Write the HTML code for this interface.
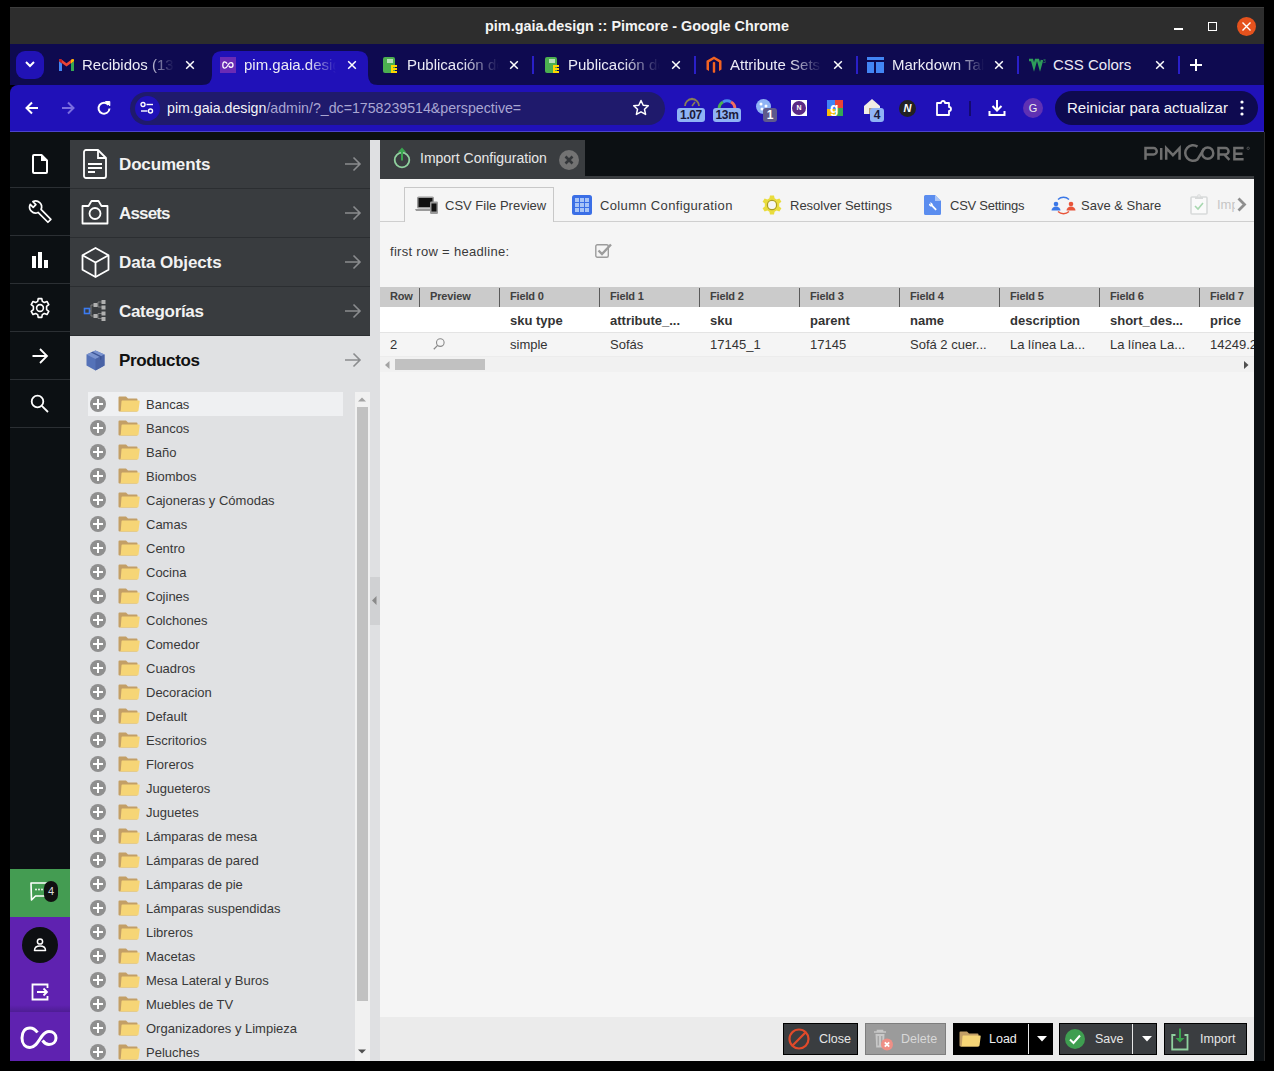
<!DOCTYPE html>
<html><head><meta charset="utf-8">
<style>
*{margin:0;padding:0;box-sizing:border-box}
html,body{width:1274px;height:1071px;overflow:hidden;background:#000;font-family:"Liberation Sans",sans-serif;position:relative}
.a{position:absolute}
svg{position:absolute;overflow:visible}
.ctab{top:44px;height:41px;color:#ecebf6;font-size:15px;line-height:41px}
.tsep{top:56px;width:2px;height:18px;background:#2a1fc9}
</style></head>
<body>
<!-- ============ BROWSER CHROME ============ -->
<div class="a" style="left:10px;top:7px;width:1254px;height:37px;background:#2d2d2d;border-top:1px solid #3d3d3d"></div>
<div class="a" style="left:10px;top:8px;width:1254px;height:36px;color:#f4f4f4;font-weight:bold;font-size:14.4px;line-height:37px;text-align:center;padding-left:0px">pim.gaia.design :: Pimcore - Google Chrome</div>
<!-- window controls -->
<div class="a" style="left:1174px;top:28px;width:9px;height:1.5px;background:#fff"></div>
<div class="a" style="left:1208px;top:22px;width:9px;height:9px;border:1.5px solid #fff"></div>
<div class="a" style="left:1237px;top:17px;width:19px;height:19px;border-radius:50%;background:#e5521d"></div>
<svg style="left:1242px;top:22px" width="9" height="9"><path d="M0.5 0.5L8.5 8.5M8.5 0.5L0.5 8.5" stroke="#fff" stroke-width="1.4"/></svg>

<!-- tab strip -->
<div class="a" style="left:10px;top:44px;width:1254px;height:41px;background:#0e0a50"></div>
<div class="a" style="left:16px;top:51px;width:28px;height:28px;border-radius:9px;background:#2112b5"></div>
<svg style="left:25px;top:61px" width="10" height="7"><path d="M1 1L5 5L9 1" stroke="#fff" stroke-width="2" fill="none"/></svg>

<!-- active tab -->
<svg style="left:202px;top:51px" width="176" height="35"><path d="M0 34 Q10 34 10 24 L10 10 Q10 0 20 0 L156 0 Q166 0 166 10 L166 24 Q166 34 176 34 L176 35 L0 35Z" fill="#2011b8"/></svg>

<!-- tab 1 gmail -->
<svg style="left:59px;top:59px" width="15" height="12" viewBox="0 0 15 12"><path d="M0 2 L0 12 L3 12 L3 4.5Z" fill="#4285f4"/><path d="M12 4.5 L12 12 L15 12 L15 2Z" fill="#34a853"/><path d="M0 2 L7.5 7.5 L15 2 L15 0.8 Q14 -0.5 12.5 0.6 L7.5 4.3 L2.5 0.6 Q1 -0.5 0 0.8Z" fill="#ea4335"/><path d="M12 4.5 L15 2 L15 0.8 Q14 -0.5 12.5 0.6 L12 1Z" fill="#fbbc04"/><path d="M0 2 L3 4.5 L3 1 L2.5 0.6 Q1 -0.5 0 0.8Z" fill="#c5221f"/></svg>
<div class="a ctab" style="left:82px;width:92px;overflow:hidden;white-space:nowrap;-webkit-mask-image:linear-gradient(90deg,#000 70%,transparent 100%)">Recibidos (13)</div>
<svg style="left:185px;top:60px" width="10" height="10"><path d="M1.2 1.2L8.8 8.8M8.8 1.2L1.2 8.8" stroke="#fff" stroke-width="1.5"/></svg>

<!-- tab 2 pim -->
<div class="a" style="left:220px;top:57px;width:16px;height:16px;background:#6a2bb5"></div>
<svg style="left:222px;top:61px" width="12" height="8" viewBox="0 0 12 8"><path d="M5.2 2.6 C4.2 1.2 3.4 0.8 2.6 0.8 C1.5 0.8 0.8 2 0.8 4 C0.8 6 1.5 7.2 2.8 7.2 C4.6 7.2 6 4 6.6 3.2 C7.2 2.2 8 1.6 9 1.6 C10.2 1.6 11 2.6 11 4 C11 5.4 10.2 6.4 9 6.4 C8 6.4 7.4 5.8 6.8 5" stroke="#fff" stroke-width="1.3" fill="none"/></svg>
<div class="a ctab" style="left:244px;width:92px;overflow:hidden;white-space:nowrap;-webkit-mask-image:linear-gradient(90deg,#000 70%,transparent 100%)">pim.gaia.design</div>
<svg style="left:347px;top:60px" width="10" height="10"><path d="M1.2 1.2L8.8 8.8M8.8 1.2L1.2 8.8" stroke="#fff" stroke-width="1.5"/></svg>

<!-- tab 3 -->
<svg style="left:382px;top:56px" width="17" height="18" viewBox="0 0 17 18"><rect x="1" y="1" width="12" height="16" rx="2" fill="#4caf50"/><rect x="5" y="3" width="6" height="4" fill="#b5e0b7"/><path d="M9 9h6v2h-4v1h4v2h-4v1h4v2H9z" fill="#ffd600"/></svg>
<div class="a ctab" style="left:407px;width:92px;overflow:hidden;white-space:nowrap;-webkit-mask-image:linear-gradient(90deg,#000 60%,transparent 100%)">Publicación de</div>
<svg style="left:509px;top:60px" width="10" height="10"><path d="M1.2 1.2L8.8 8.8M8.8 1.2L1.2 8.8" stroke="#fff" stroke-width="1.5"/></svg>
<div class="a tsep" style="left:532px"></div>

<!-- tab 4 -->
<svg style="left:544px;top:56px" width="17" height="18" viewBox="0 0 17 18"><rect x="1" y="1" width="12" height="16" rx="2" fill="#4caf50"/><rect x="5" y="3" width="6" height="4" fill="#b5e0b7"/><path d="M9 9h6v2h-4v1h4v2h-4v1h4v2H9z" fill="#ffd600"/></svg>
<div class="a ctab" style="left:568px;width:92px;overflow:hidden;white-space:nowrap;-webkit-mask-image:linear-gradient(90deg,#000 60%,transparent 100%)">Publicación de</div>
<svg style="left:671px;top:60px" width="10" height="10"><path d="M1.2 1.2L8.8 8.8M8.8 1.2L1.2 8.8" stroke="#fff" stroke-width="1.5"/></svg>
<div class="a tsep" style="left:694px"></div>

<!-- tab 5 magento -->
<svg style="left:706px;top:56px" width="16" height="18" viewBox="0 0 16 18"><path d="M8 0.5L15.5 4.8V13.5L13 15V6.2L8 3.3L3 6.2V15L0.5 13.5V4.8Z" fill="#f26322"/><path d="M6.8 6.5L8 5.8L9.2 6.5V16.3L8 17L6.8 16.3Z" fill="#f26322"/></svg>
<div class="a ctab" style="left:730px;width:92px;overflow:hidden;white-space:nowrap;-webkit-mask-image:linear-gradient(90deg,#000 65%,transparent 100%)">Attribute Sets</div>
<svg style="left:833px;top:60px" width="10" height="10"><path d="M1.2 1.2L8.8 8.8M8.8 1.2L1.2 8.8" stroke="#fff" stroke-width="1.5"/></svg>
<div class="a tsep" style="left:856px"></div>

<!-- tab 6 markdown -->
<svg style="left:867px;top:57px" width="17" height="16" viewBox="0 0 17 16"><rect x="0" y="0" width="17" height="3" fill="#4285f4"/><rect x="0" y="5" width="7" height="11" fill="#4285f4"/><rect x="9" y="5" width="8" height="11" fill="#4285f4"/></svg>
<div class="a ctab" style="left:892px;width:92px;overflow:hidden;white-space:nowrap;-webkit-mask-image:linear-gradient(90deg,#000 70%,transparent 100%)">Markdown Tables</div>
<svg style="left:994px;top:60px" width="10" height="10"><path d="M1.2 1.2L8.8 8.8M8.8 1.2L1.2 8.8" stroke="#fff" stroke-width="1.5"/></svg>
<div class="a tsep" style="left:1017px"></div>

<!-- tab 7 w3 -->
<svg style="left:1029px;top:59px" width="17" height="12" viewBox="0 0 17 12"><path d="M0 1H3L5 8L7 1H9L11 8L13 1" stroke="#2e9c5a" stroke-width="2.6" fill="none"/><text x="14" y="4" font-size="5" fill="#2e9c5a" font-family="Liberation Sans">3</text></svg>
<div class="a ctab" style="left:1053px;width:100px;overflow:hidden;white-space:nowrap">CSS Colors</div>
<svg style="left:1155px;top:60px" width="10" height="10"><path d="M1.2 1.2L8.8 8.8M8.8 1.2L1.2 8.8" stroke="#fff" stroke-width="1.5"/></svg>
<div class="a tsep" style="left:1178px"></div>
<svg style="left:1190px;top:59px" width="12" height="12"><path d="M6 0V12M0 6H12" stroke="#fff" stroke-width="2"/></svg>

<!-- toolbar -->
<div class="a" style="left:10px;top:85px;width:1254px;height:47px;background:#2011b8;border-bottom:1px solid #4c44cc;border-top-left-radius:8px"></div>
<div class="a" style="left:212px;top:84px;width:156px;height:3px;background:#2011b8"></div>
<svg style="left:25px;top:101px" width="14" height="14"><path d="M13 7H2M7 1.5L1.5 7L7 12.5" stroke="#fff" stroke-width="2" fill="none"/></svg>
<svg style="left:61px;top:101px" width="14" height="14"><path d="M1 7H12M7 1.5L12.5 7L7 12.5" stroke="#7a6ee0" stroke-width="2" fill="none"/></svg>
<svg style="left:97px;top:101px" width="14" height="14"><path d="M11.5 4 A5.5 5.5 0 1 0 12.5 7.5" stroke="#fff" stroke-width="2" fill="none"/><path d="M8.5 0.5H12.8V4.8Z" fill="#fff" stroke="#fff" stroke-width="1"/></svg>
<div class="a" style="left:130px;top:92px;width:535px;height:33px;border-radius:17px;background:#1f1a6c"></div>
<div class="a" style="left:135px;top:96px;width:25px;height:25px;border-radius:50%;background:#2011b8"></div>
<svg style="left:140px;top:101px" width="14" height="14"><circle cx="3" cy="3.5" r="2" stroke="#fff" stroke-width="1.4" fill="none"/><path d="M6.5 3.5H13" stroke="#fff" stroke-width="1.4"/><circle cx="10.5" cy="10" r="2" stroke="#fff" stroke-width="1.4" fill="none"/><path d="M1 10H7.5" stroke="#fff" stroke-width="1.4"/></svg>
<div class="a" style="left:167px;top:92px;height:33px;line-height:33px;font-size:14.2px;color:#f4f4f8;white-space:nowrap">pim.gaia.design<span style="color:#a9a6d2">/admin/?_dc=1758239514&amp;perspective=</span></div>
<svg style="left:632px;top:99px" width="18" height="18" viewBox="0 0 18 18"><path d="M9 1.5L11.2 6.3L16.3 6.8L12.5 10.3L13.6 15.4L9 12.8L4.4 15.4L5.5 10.3L1.7 6.8L6.8 6.3Z" stroke="#fff" stroke-width="1.5" fill="none" stroke-linejoin="round"/></svg>

<!-- extensions -->
<svg style="left:679px;top:97px" width="26" height="26" viewBox="0 0 26 26"><path d="M6 9 A7 7 0 0 1 20 9" stroke="#8a7f57" stroke-width="1.8" fill="none"/><path d="M13 9L16 5" stroke="#8a7f57" stroke-width="1.6"/><circle cx="13" cy="2" r="1.3" fill="#8a7f57"/></svg>
<div class="a" style="left:677px;top:108px;width:28px;height:14px;border-radius:3px;background:#8fb3f5;color:#1a1a3a;font-size:12px;font-weight:bold;line-height:14px;text-align:center;letter-spacing:-0.4px">1.07</div>
<svg style="left:714px;top:96px" width="26" height="14" viewBox="0 0 26 14"><path d="M5 13 A8 8 0 0 1 9 6" stroke="#4caf50" stroke-width="3" fill="none"/><path d="M9 6 A8 8 0 0 1 17 6" stroke="#4a8cf0" stroke-width="3" fill="none"/><path d="M17 6 A8 8 0 0 1 21 13" stroke="#f07060" stroke-width="3" fill="none"/></svg>
<div class="a" style="left:713px;top:108px;width:28px;height:14px;border-radius:3px;background:#8fb3f5;color:#1a1a3a;font-size:12px;font-weight:bold;line-height:14px;text-align:center;letter-spacing:-0.4px">13m</div>
<div class="a" style="left:756px;top:99px;width:15px;height:15px;border-radius:50%;background:#8fb3f5"></div>
<svg style="left:758px;top:101px" width="11" height="11"><circle cx="3" cy="3" r="1.5" fill="#fff"/><circle cx="8" cy="5" r="1.5" fill="#fff"/><circle cx="4" cy="8" r="1.5" fill="#fff"/></svg>
<div class="a" style="left:763px;top:108px;width:14px;height:14px;border-radius:3px;background:#5f5a8c;color:#fff;font-size:12px;font-weight:bold;line-height:14px;text-align:center">1</div>
<div class="a" style="left:791px;top:100px;width:16px;height:16px;background:#fff"></div>
<div class="a" style="left:792px;top:101px;width:14px;height:14px;border-radius:50%;background:#5b2a86;color:#fff;font-size:7px;font-weight:bold;line-height:14px;text-align:center">N</div>
<svg style="left:827px;top:100px" width="16" height="16" viewBox="0 0 16 16"><rect width="16" height="16" fill="#fff"/><path d="M8 0H16V8H8Z" fill="#ea4335"/><path d="M8 8H16V16H8Z" fill="#34a853"/><path d="M0 0H8V9H0Z" fill="#4285f4"/><path d="M0 9H8V16H0Z" fill="#fbbc04"/><text x="3" y="13" font-size="14" font-weight="bold" fill="#fff" font-family="Liberation Sans">g</text></svg>
<svg style="left:863px;top:98px" width="18" height="18" viewBox="0 0 18 18"><path d="M1 8L9 1L17 8V16H1Z" fill="#f1ede4"/><path d="M6 10H11V16H6Z" fill="#b59a74"/></svg>
<div class="a" style="left:870px;top:108px;width:14px;height:14px;border-radius:3px;background:#8fb3f5;color:#1a1a3a;font-size:12px;font-weight:bold;line-height:14px;text-align:center">4</div>
<div class="a" style="left:899px;top:100px;width:17px;height:17px;border-radius:50%;background:#222"></div>
<div class="a" style="left:899px;top:100px;width:17px;height:17px;color:#fff;font-size:11px;font-weight:bold;font-style:italic;line-height:17px;text-align:center">N</div>
<svg style="left:935px;top:99px" width="18" height="18" viewBox="0 0 18 18"><path d="M2 4H6A2 2 0 0 1 10 4H14V8A2 2 0 0 1 14 12V16H2Z" stroke="#fff" stroke-width="1.8" fill="none" stroke-linejoin="round"/></svg>
<div class="a" style="left:969px;top:101px;width:2px;height:15px;background:#140a70"></div>
<svg style="left:988px;top:99px" width="18" height="18" viewBox="0 0 18 18"><path d="M9 1V11M4.5 7L9 11.5L13.5 7" stroke="#fff" stroke-width="2" fill="none"/><path d="M1.5 12V16H16.5V12" stroke="#fff" stroke-width="2" fill="none"/></svg>
<div class="a" style="left:1023px;top:98px;width:20px;height:20px;border-radius:50%;background:#5f31b3;color:#eee;font-size:11px;line-height:20px;text-align:center">G</div>
<div class="a" style="left:1055px;top:91px;width:203px;height:34px;border-radius:17px;background:#0e0a50"></div>
<div class="a" style="left:1067px;top:91px;height:34px;line-height:34px;font-size:15px;color:#f4f4f8;white-space:nowrap">Reiniciar para actualizar</div>
<svg style="left:1240px;top:100px" width="4" height="16"><circle cx="2" cy="2" r="1.6" fill="#fff"/><circle cx="2" cy="8" r="1.6" fill="#fff"/><circle cx="2" cy="14" r="1.6" fill="#fff"/></svg>
<!-- ============ PIMCORE FRAME ============ -->
<div class="a" style="left:10px;top:132px;width:1254px;height:929px;background:#0c1013"></div>
<div class="a" style="left:1264px;top:132px;width:1px;height:929px;background:#2a2a2a"></div>
<!-- left icon column separators -->
<div class="a" style="left:10px;top:187px;width:60px;height:1px;background:#2b2f33"></div>
<div class="a" style="left:10px;top:235px;width:60px;height:1px;background:#2b2f33"></div>
<div class="a" style="left:10px;top:283px;width:60px;height:1px;background:#2b2f33"></div>
<div class="a" style="left:10px;top:331px;width:60px;height:1px;background:#2b2f33"></div>
<div class="a" style="left:10px;top:379px;width:60px;height:1px;background:#2b2f33"></div>
<div class="a" style="left:10px;top:427px;width:60px;height:1px;background:#2b2f33"></div>
<!-- doc icon -->
<svg style="left:32px;top:154px" width="16" height="20" viewBox="0 0 16 20"><path d="M2 1H9.5L15 6.5V18A1 1 0 0 1 14 19H2A1 1 0 0 1 1 18V2A1 1 0 0 1 2 1Z" stroke="#fff" stroke-width="2" fill="none" stroke-linejoin="round"/><path d="M9 1V7H15Z" fill="#fff"/></svg>
<!-- wrench -->
<svg style="left:20px;top:195px" width="40" height="30"><g transform="translate(15.6 12) rotate(-45)"><path d="M-2.1 19.5L-2.1 5.6A6 6 0 0 1 -1.9 -5.7L-1.9 -1.5L1.9 -1.5L1.9 -5.7A6 6 0 0 1 2.1 5.6L2.1 19.5Z" stroke="#fff" stroke-width="1.7" fill="none" stroke-linejoin="round"/></g></svg>
<!-- bar chart -->
<div class="a" style="left:32px;top:256px;width:4px;height:12px;background:#fff"></div>
<div class="a" style="left:38px;top:252px;width:4px;height:16px;background:#fff"></div>
<div class="a" style="left:44px;top:260px;width:4px;height:8px;background:#fff"></div>
<!-- gear -->
<svg style="left:30px;top:298px" width="20" height="20" viewBox="-10 -10 20 20"><path d="M-1.8 -9.4 L1.8 -9.4 L2.3 -6.6 L4.3 -5.5 L7 -6.5 L8.8 -3.4 L6.6 -1.6 L6.6 1.6 L8.8 3.4 L7 6.5 L4.3 5.5 L2.3 6.6 L1.8 9.4 L-1.8 9.4 L-2.3 6.6 L-4.3 5.5 L-7 6.5 L-8.8 3.4 L-6.6 1.6 L-6.6 -1.6 L-8.8 -3.4 L-7 -6.5 L-4.3 -5.5 L-2.3 -6.6Z" stroke="#fff" stroke-width="1.6" fill="none" stroke-linejoin="round"/><circle r="3.4" stroke="#fff" stroke-width="1.6" fill="none"/></svg>
<!-- arrow -->
<svg style="left:32px;top:348px" width="16" height="16" viewBox="0 0 16 16"><path d="M0.5 8H15M8 1L15 8L8 15" stroke="#fff" stroke-width="1.8" fill="none"/></svg>
<!-- search -->
<svg style="left:30px;top:394px" width="19" height="19" viewBox="0 0 19 19"><circle cx="7.5" cy="7.5" r="5.8" stroke="#fff" stroke-width="1.8" fill="none"/><path d="M11.8 11.8L18 18" stroke="#fff" stroke-width="1.8"/></svg>

<!-- green notification -->
<div class="a" style="left:10px;top:869px;width:60px;height:48px;background:#449c52"></div>
<svg style="left:30px;top:882px" width="22" height="20" viewBox="0 0 22 20"><path d="M1 1H17V14H5.5L1.5 18Z" stroke="#fff" stroke-width="1.6" fill="none" stroke-linejoin="round"/><circle cx="6" cy="7.5" r="0.9" fill="#fff"/><circle cx="9" cy="7.5" r="0.9" fill="#fff"/><circle cx="12" cy="7.5" r="0.9" fill="#fff"/></svg>
<div class="a" style="left:44px;top:881px;width:14px;height:21px;border-radius:7px;background:#111;color:#ddd;font-size:11px;line-height:21px;text-align:center">4</div>
<!-- purple -->
<div class="a" style="left:10px;top:917px;width:60px;height:144px;background:#5f22b0"></div>
<div class="a" style="left:10px;top:1005px;width:60px;height:7px;background:linear-gradient(#5f22b0,#4e1d94)"></div>
<div class="a" style="left:22px;top:927px;width:36px;height:36px;border-radius:50%;background:#0d0f12"></div>
<svg style="left:32px;top:937px" width="16" height="16" viewBox="0 0 16 16"><circle cx="8" cy="4.5" r="2.6" stroke="#fff" stroke-width="1.5" fill="none"/><path d="M2.5 13.5C2.5 10.5 5 9 8 9C11 9 13.5 10.5 13.5 13.5Z" stroke="#fff" stroke-width="1.5" fill="none" stroke-linejoin="round"/></svg>
<svg style="left:31px;top:983px" width="18" height="18" viewBox="0 0 18 18"><path d="M16.5 5V1.5H1.5V16.5H16.5V13" stroke="#fff" stroke-width="1.8" fill="none"/><path d="M6 9H16M12.5 5.5L16 9L12.5 12.5" stroke="#fff" stroke-width="1.8" fill="none"/></svg>
<svg style="left:20px;top:1026px" width="40" height="24" viewBox="0 0 40 24"><path d="M17.5 6.5 C15 3 12.5 2 10 2 C5 2 2 6 2 12 C2 18 5.5 21.5 10 21.5 C16 21.5 19 14 22 10 C24 7.5 26 5.5 29 5.5 C33 5.5 36 8 36 12 C36 16 33 18.5 29 18.5 C26 18.5 24 16.5 22.5 14.5" stroke="#fff" stroke-width="3" fill="none"/></svg>

<!-- left panel headers -->
<div class="a" style="left:70px;top:140px;width:300px;height:196px;background:#393c3f"></div>
<div class="a" style="left:70px;top:188px;width:300px;height:1px;background:#2b2e31"></div>
<div class="a" style="left:70px;top:237px;width:300px;height:1px;background:#2b2e31"></div>
<div class="a" style="left:70px;top:286px;width:300px;height:1px;background:#2b2e31"></div>
<div class="a" style="left:70px;top:335px;width:300px;height:1px;background:#2b2e31"></div>
<div class="a" style="left:70px;top:336px;width:300px;height:725px;background:#e0e1e3"></div>

<div class="a" style="left:119px;top:140px;height:48px;line-height:50px;font-size:17px;font-weight:bold;letter-spacing:-0.15px;color:#f2f2f2">Documents</div>
<div class="a" style="left:119px;top:189px;height:48px;line-height:50px;font-size:17px;font-weight:bold;letter-spacing:-0.85px;color:#f2f2f2">Assets</div>
<div class="a" style="left:119px;top:238px;height:48px;line-height:50px;font-size:17px;font-weight:bold;letter-spacing:-0.12px;color:#f2f2f2">Data Objects</div>
<div class="a" style="left:119px;top:287px;height:48px;line-height:50px;font-size:17px;font-weight:bold;letter-spacing:-0.33px;color:#f2f2f2">Categorías</div>
<div class="a" style="left:119px;top:336px;height:48px;line-height:50px;font-size:17px;font-weight:bold;letter-spacing:-0.4px;color:#111">Productos</div>
<!-- arrows -->
<svg style="left:345px;top:156px" width="16" height="16" viewBox="0 0 16 16"><path d="M0 8H15M8.5 1.5L15 8L8.5 14.5" stroke="#8a8c8e" stroke-width="1.6" fill="none"/></svg>
<svg style="left:345px;top:205px" width="16" height="16" viewBox="0 0 16 16"><path d="M0 8H15M8.5 1.5L15 8L8.5 14.5" stroke="#8a8c8e" stroke-width="1.6" fill="none"/></svg>
<svg style="left:345px;top:254px" width="16" height="16" viewBox="0 0 16 16"><path d="M0 8H15M8.5 1.5L15 8L8.5 14.5" stroke="#8a8c8e" stroke-width="1.6" fill="none"/></svg>
<svg style="left:345px;top:303px" width="16" height="16" viewBox="0 0 16 16"><path d="M0 8H15M8.5 1.5L15 8L8.5 14.5" stroke="#8a8c8e" stroke-width="1.6" fill="none"/></svg>
<svg style="left:345px;top:352px" width="16" height="16" viewBox="0 0 16 16"><path d="M0 8H15M8.5 1.5L15 8L8.5 14.5" stroke="#8a8c8e" stroke-width="1.6" fill="none"/></svg>
<!-- header icons -->
<svg style="left:83px;top:149px" width="24" height="30" viewBox="0 0 24 30"><path d="M3 1H15L23 9V27A2 2 0 0 1 21 29H3A2 2 0 0 1 1 27V3A2 2 0 0 1 3 1Z" stroke="#fff" stroke-width="1.8" fill="none" stroke-linejoin="round"/><path d="M15 1V9H23" stroke="#fff" stroke-width="1.8" fill="none"/><path d="M5 15H19M5 19H19M5 23H12" stroke="#fff" stroke-width="1.8"/></svg>
<svg style="left:81px;top:199px" width="28" height="26" viewBox="0 0 28 26"><path d="M1.5 7H7.5L10.5 2H17.5L20.5 7H26.5V24.5H1.5Z" stroke="#fff" stroke-width="1.8" fill="none" stroke-linejoin="round"/><circle cx="14" cy="14.5" r="5.5" stroke="#fff" stroke-width="1.8" fill="none"/></svg>
<svg style="left:81px;top:247px" width="29" height="31" viewBox="0 0 29 31"><path d="M14.5 1L27.5 8.2V22.8L14.5 30L1.5 22.8V8.2Z" stroke="#fff" stroke-width="1.8" fill="none" stroke-linejoin="round"/><path d="M1.5 8.2L14.5 15.5L27.5 8.2M14.5 15.5V30" stroke="#fff" stroke-width="1.8" fill="none"/></svg>
<svg style="left:83px;top:299px" width="25" height="22" viewBox="0 0 25 22"><rect x="1.5" y="9.5" width="5" height="5" stroke="#3b7bf0" stroke-width="1.6" fill="none"/><path d="M6.5 12H8M8 6V17M8 6H11M8 17H11M13 6H15M15 3V8M15 3H19M15 8H19M13 17H15M15 14.5V19.5M15 14.5H19M15 19.5H19" stroke="#8c8c8c" stroke-width="0.8" fill="none"/><rect x="10.5" y="4" width="4" height="4" fill="#b0b0b0"/><rect x="10.5" y="15" width="4" height="4" fill="#b0b0b0"/><rect x="18.5" y="1" width="4" height="4" fill="#b0b0b0"/><rect x="18.5" y="6.5" width="4" height="4" fill="#b0b0b0"/><rect x="18.5" y="12.5" width="4" height="4" fill="#b0b0b0"/><rect x="18.5" y="18" width="4" height="4" fill="#b0b0b0"/></svg>
<svg style="left:86px;top:350px" width="19" height="21" viewBox="0 0 19 21"><path d="M9.5 0.5L18.5 4.5V15.5L9.5 20.5L0.5 15.5V4.5Z" fill="#5572b8"/><path d="M0.5 4.5L9.5 9L18.5 4.5L9.5 0.5Z" fill="#7a93cf"/><path d="M9.5 9V20.5L18.5 15.5V4.5Z" fill="#4a63a6"/><path d="M5 2.5L14 7V10L15.5 9.2V6.2L6.5 1.8Z" fill="#3d5596"/></svg>
<!-- ============ TREE ============ -->
<div class="a" style="left:70px;top:384px;width:300px;height:677px;overflow:hidden">
<div class="a" style="left:18px;top:8px;width:255px;height:24px;background:#eff0f2"></div>
<div class="a" style="left:20px;top:12px;width:16px;height:16px;border-radius:50%;background:#8f8f8f"></div>
<div class="a" style="left:23px;top:19px;width:10px;height:2px;background:#fff"></div><div class="a" style="left:27px;top:15px;width:2px;height:10px;background:#fff"></div>
<svg style="left:48px;top:12px" width="22" height="16" viewBox="0 0 22 16"><path d="M1.5 0.5H8L10 2.5H18.5Q19.5 2.5 19.5 3.5V14.5Q19.5 15.5 18.5 15.5H1.5Q0.5 15.5 0.5 14.5V1.5Q0.5 0.5 1.5 0.5Z" fill="#c39f66"/><path d="M4.2 4.5H21Q21.8 4.5 21.7 5.3L20.5 14.5Q20.3 15.5 19.3 15.5H1.6Q2.6 15.3 2.8 14.3L3.5 5.3Q3.6 4.5 4.2 4.5Z" fill="#f6d576"/></svg>
<div class="a" style="left:76px;top:9px;height:24px;line-height:24px;font-size:13px;color:#383838;white-space:nowrap">Bancas</div>
<div class="a" style="left:20px;top:36px;width:16px;height:16px;border-radius:50%;background:#8f8f8f"></div>
<div class="a" style="left:23px;top:43px;width:10px;height:2px;background:#fff"></div><div class="a" style="left:27px;top:39px;width:2px;height:10px;background:#fff"></div>
<svg style="left:48px;top:36px" width="22" height="16" viewBox="0 0 22 16"><path d="M1.5 0.5H8L10 2.5H18.5Q19.5 2.5 19.5 3.5V14.5Q19.5 15.5 18.5 15.5H1.5Q0.5 15.5 0.5 14.5V1.5Q0.5 0.5 1.5 0.5Z" fill="#c39f66"/><path d="M4.2 4.5H21Q21.8 4.5 21.7 5.3L20.5 14.5Q20.3 15.5 19.3 15.5H1.6Q2.6 15.3 2.8 14.3L3.5 5.3Q3.6 4.5 4.2 4.5Z" fill="#f6d576"/></svg>
<div class="a" style="left:76px;top:33px;height:24px;line-height:24px;font-size:13px;color:#383838;white-space:nowrap">Bancos</div>
<div class="a" style="left:20px;top:60px;width:16px;height:16px;border-radius:50%;background:#8f8f8f"></div>
<div class="a" style="left:23px;top:67px;width:10px;height:2px;background:#fff"></div><div class="a" style="left:27px;top:63px;width:2px;height:10px;background:#fff"></div>
<svg style="left:48px;top:60px" width="22" height="16" viewBox="0 0 22 16"><path d="M1.5 0.5H8L10 2.5H18.5Q19.5 2.5 19.5 3.5V14.5Q19.5 15.5 18.5 15.5H1.5Q0.5 15.5 0.5 14.5V1.5Q0.5 0.5 1.5 0.5Z" fill="#c39f66"/><path d="M4.2 4.5H21Q21.8 4.5 21.7 5.3L20.5 14.5Q20.3 15.5 19.3 15.5H1.6Q2.6 15.3 2.8 14.3L3.5 5.3Q3.6 4.5 4.2 4.5Z" fill="#f6d576"/></svg>
<div class="a" style="left:76px;top:57px;height:24px;line-height:24px;font-size:13px;color:#383838;white-space:nowrap">Baño</div>
<div class="a" style="left:20px;top:84px;width:16px;height:16px;border-radius:50%;background:#8f8f8f"></div>
<div class="a" style="left:23px;top:91px;width:10px;height:2px;background:#fff"></div><div class="a" style="left:27px;top:87px;width:2px;height:10px;background:#fff"></div>
<svg style="left:48px;top:84px" width="22" height="16" viewBox="0 0 22 16"><path d="M1.5 0.5H8L10 2.5H18.5Q19.5 2.5 19.5 3.5V14.5Q19.5 15.5 18.5 15.5H1.5Q0.5 15.5 0.5 14.5V1.5Q0.5 0.5 1.5 0.5Z" fill="#c39f66"/><path d="M4.2 4.5H21Q21.8 4.5 21.7 5.3L20.5 14.5Q20.3 15.5 19.3 15.5H1.6Q2.6 15.3 2.8 14.3L3.5 5.3Q3.6 4.5 4.2 4.5Z" fill="#f6d576"/></svg>
<div class="a" style="left:76px;top:81px;height:24px;line-height:24px;font-size:13px;color:#383838;white-space:nowrap">Biombos</div>
<div class="a" style="left:20px;top:108px;width:16px;height:16px;border-radius:50%;background:#8f8f8f"></div>
<div class="a" style="left:23px;top:115px;width:10px;height:2px;background:#fff"></div><div class="a" style="left:27px;top:111px;width:2px;height:10px;background:#fff"></div>
<svg style="left:48px;top:108px" width="22" height="16" viewBox="0 0 22 16"><path d="M1.5 0.5H8L10 2.5H18.5Q19.5 2.5 19.5 3.5V14.5Q19.5 15.5 18.5 15.5H1.5Q0.5 15.5 0.5 14.5V1.5Q0.5 0.5 1.5 0.5Z" fill="#c39f66"/><path d="M4.2 4.5H21Q21.8 4.5 21.7 5.3L20.5 14.5Q20.3 15.5 19.3 15.5H1.6Q2.6 15.3 2.8 14.3L3.5 5.3Q3.6 4.5 4.2 4.5Z" fill="#f6d576"/></svg>
<div class="a" style="left:76px;top:105px;height:24px;line-height:24px;font-size:13px;color:#383838;white-space:nowrap">Cajoneras y Cómodas</div>
<div class="a" style="left:20px;top:132px;width:16px;height:16px;border-radius:50%;background:#8f8f8f"></div>
<div class="a" style="left:23px;top:139px;width:10px;height:2px;background:#fff"></div><div class="a" style="left:27px;top:135px;width:2px;height:10px;background:#fff"></div>
<svg style="left:48px;top:132px" width="22" height="16" viewBox="0 0 22 16"><path d="M1.5 0.5H8L10 2.5H18.5Q19.5 2.5 19.5 3.5V14.5Q19.5 15.5 18.5 15.5H1.5Q0.5 15.5 0.5 14.5V1.5Q0.5 0.5 1.5 0.5Z" fill="#c39f66"/><path d="M4.2 4.5H21Q21.8 4.5 21.7 5.3L20.5 14.5Q20.3 15.5 19.3 15.5H1.6Q2.6 15.3 2.8 14.3L3.5 5.3Q3.6 4.5 4.2 4.5Z" fill="#f6d576"/></svg>
<div class="a" style="left:76px;top:129px;height:24px;line-height:24px;font-size:13px;color:#383838;white-space:nowrap">Camas</div>
<div class="a" style="left:20px;top:156px;width:16px;height:16px;border-radius:50%;background:#8f8f8f"></div>
<div class="a" style="left:23px;top:163px;width:10px;height:2px;background:#fff"></div><div class="a" style="left:27px;top:159px;width:2px;height:10px;background:#fff"></div>
<svg style="left:48px;top:156px" width="22" height="16" viewBox="0 0 22 16"><path d="M1.5 0.5H8L10 2.5H18.5Q19.5 2.5 19.5 3.5V14.5Q19.5 15.5 18.5 15.5H1.5Q0.5 15.5 0.5 14.5V1.5Q0.5 0.5 1.5 0.5Z" fill="#c39f66"/><path d="M4.2 4.5H21Q21.8 4.5 21.7 5.3L20.5 14.5Q20.3 15.5 19.3 15.5H1.6Q2.6 15.3 2.8 14.3L3.5 5.3Q3.6 4.5 4.2 4.5Z" fill="#f6d576"/></svg>
<div class="a" style="left:76px;top:153px;height:24px;line-height:24px;font-size:13px;color:#383838;white-space:nowrap">Centro</div>
<div class="a" style="left:20px;top:180px;width:16px;height:16px;border-radius:50%;background:#8f8f8f"></div>
<div class="a" style="left:23px;top:187px;width:10px;height:2px;background:#fff"></div><div class="a" style="left:27px;top:183px;width:2px;height:10px;background:#fff"></div>
<svg style="left:48px;top:180px" width="22" height="16" viewBox="0 0 22 16"><path d="M1.5 0.5H8L10 2.5H18.5Q19.5 2.5 19.5 3.5V14.5Q19.5 15.5 18.5 15.5H1.5Q0.5 15.5 0.5 14.5V1.5Q0.5 0.5 1.5 0.5Z" fill="#c39f66"/><path d="M4.2 4.5H21Q21.8 4.5 21.7 5.3L20.5 14.5Q20.3 15.5 19.3 15.5H1.6Q2.6 15.3 2.8 14.3L3.5 5.3Q3.6 4.5 4.2 4.5Z" fill="#f6d576"/></svg>
<div class="a" style="left:76px;top:177px;height:24px;line-height:24px;font-size:13px;color:#383838;white-space:nowrap">Cocina</div>
<div class="a" style="left:20px;top:204px;width:16px;height:16px;border-radius:50%;background:#8f8f8f"></div>
<div class="a" style="left:23px;top:211px;width:10px;height:2px;background:#fff"></div><div class="a" style="left:27px;top:207px;width:2px;height:10px;background:#fff"></div>
<svg style="left:48px;top:204px" width="22" height="16" viewBox="0 0 22 16"><path d="M1.5 0.5H8L10 2.5H18.5Q19.5 2.5 19.5 3.5V14.5Q19.5 15.5 18.5 15.5H1.5Q0.5 15.5 0.5 14.5V1.5Q0.5 0.5 1.5 0.5Z" fill="#c39f66"/><path d="M4.2 4.5H21Q21.8 4.5 21.7 5.3L20.5 14.5Q20.3 15.5 19.3 15.5H1.6Q2.6 15.3 2.8 14.3L3.5 5.3Q3.6 4.5 4.2 4.5Z" fill="#f6d576"/></svg>
<div class="a" style="left:76px;top:201px;height:24px;line-height:24px;font-size:13px;color:#383838;white-space:nowrap">Cojines</div>
<div class="a" style="left:20px;top:228px;width:16px;height:16px;border-radius:50%;background:#8f8f8f"></div>
<div class="a" style="left:23px;top:235px;width:10px;height:2px;background:#fff"></div><div class="a" style="left:27px;top:231px;width:2px;height:10px;background:#fff"></div>
<svg style="left:48px;top:228px" width="22" height="16" viewBox="0 0 22 16"><path d="M1.5 0.5H8L10 2.5H18.5Q19.5 2.5 19.5 3.5V14.5Q19.5 15.5 18.5 15.5H1.5Q0.5 15.5 0.5 14.5V1.5Q0.5 0.5 1.5 0.5Z" fill="#c39f66"/><path d="M4.2 4.5H21Q21.8 4.5 21.7 5.3L20.5 14.5Q20.3 15.5 19.3 15.5H1.6Q2.6 15.3 2.8 14.3L3.5 5.3Q3.6 4.5 4.2 4.5Z" fill="#f6d576"/></svg>
<div class="a" style="left:76px;top:225px;height:24px;line-height:24px;font-size:13px;color:#383838;white-space:nowrap">Colchones</div>
<div class="a" style="left:20px;top:252px;width:16px;height:16px;border-radius:50%;background:#8f8f8f"></div>
<div class="a" style="left:23px;top:259px;width:10px;height:2px;background:#fff"></div><div class="a" style="left:27px;top:255px;width:2px;height:10px;background:#fff"></div>
<svg style="left:48px;top:252px" width="22" height="16" viewBox="0 0 22 16"><path d="M1.5 0.5H8L10 2.5H18.5Q19.5 2.5 19.5 3.5V14.5Q19.5 15.5 18.5 15.5H1.5Q0.5 15.5 0.5 14.5V1.5Q0.5 0.5 1.5 0.5Z" fill="#c39f66"/><path d="M4.2 4.5H21Q21.8 4.5 21.7 5.3L20.5 14.5Q20.3 15.5 19.3 15.5H1.6Q2.6 15.3 2.8 14.3L3.5 5.3Q3.6 4.5 4.2 4.5Z" fill="#f6d576"/></svg>
<div class="a" style="left:76px;top:249px;height:24px;line-height:24px;font-size:13px;color:#383838;white-space:nowrap">Comedor</div>
<div class="a" style="left:20px;top:276px;width:16px;height:16px;border-radius:50%;background:#8f8f8f"></div>
<div class="a" style="left:23px;top:283px;width:10px;height:2px;background:#fff"></div><div class="a" style="left:27px;top:279px;width:2px;height:10px;background:#fff"></div>
<svg style="left:48px;top:276px" width="22" height="16" viewBox="0 0 22 16"><path d="M1.5 0.5H8L10 2.5H18.5Q19.5 2.5 19.5 3.5V14.5Q19.5 15.5 18.5 15.5H1.5Q0.5 15.5 0.5 14.5V1.5Q0.5 0.5 1.5 0.5Z" fill="#c39f66"/><path d="M4.2 4.5H21Q21.8 4.5 21.7 5.3L20.5 14.5Q20.3 15.5 19.3 15.5H1.6Q2.6 15.3 2.8 14.3L3.5 5.3Q3.6 4.5 4.2 4.5Z" fill="#f6d576"/></svg>
<div class="a" style="left:76px;top:273px;height:24px;line-height:24px;font-size:13px;color:#383838;white-space:nowrap">Cuadros</div>
<div class="a" style="left:20px;top:300px;width:16px;height:16px;border-radius:50%;background:#8f8f8f"></div>
<div class="a" style="left:23px;top:307px;width:10px;height:2px;background:#fff"></div><div class="a" style="left:27px;top:303px;width:2px;height:10px;background:#fff"></div>
<svg style="left:48px;top:300px" width="22" height="16" viewBox="0 0 22 16"><path d="M1.5 0.5H8L10 2.5H18.5Q19.5 2.5 19.5 3.5V14.5Q19.5 15.5 18.5 15.5H1.5Q0.5 15.5 0.5 14.5V1.5Q0.5 0.5 1.5 0.5Z" fill="#c39f66"/><path d="M4.2 4.5H21Q21.8 4.5 21.7 5.3L20.5 14.5Q20.3 15.5 19.3 15.5H1.6Q2.6 15.3 2.8 14.3L3.5 5.3Q3.6 4.5 4.2 4.5Z" fill="#f6d576"/></svg>
<div class="a" style="left:76px;top:297px;height:24px;line-height:24px;font-size:13px;color:#383838;white-space:nowrap">Decoracion</div>
<div class="a" style="left:20px;top:324px;width:16px;height:16px;border-radius:50%;background:#8f8f8f"></div>
<div class="a" style="left:23px;top:331px;width:10px;height:2px;background:#fff"></div><div class="a" style="left:27px;top:327px;width:2px;height:10px;background:#fff"></div>
<svg style="left:48px;top:324px" width="22" height="16" viewBox="0 0 22 16"><path d="M1.5 0.5H8L10 2.5H18.5Q19.5 2.5 19.5 3.5V14.5Q19.5 15.5 18.5 15.5H1.5Q0.5 15.5 0.5 14.5V1.5Q0.5 0.5 1.5 0.5Z" fill="#c39f66"/><path d="M4.2 4.5H21Q21.8 4.5 21.7 5.3L20.5 14.5Q20.3 15.5 19.3 15.5H1.6Q2.6 15.3 2.8 14.3L3.5 5.3Q3.6 4.5 4.2 4.5Z" fill="#f6d576"/></svg>
<div class="a" style="left:76px;top:321px;height:24px;line-height:24px;font-size:13px;color:#383838;white-space:nowrap">Default</div>
<div class="a" style="left:20px;top:348px;width:16px;height:16px;border-radius:50%;background:#8f8f8f"></div>
<div class="a" style="left:23px;top:355px;width:10px;height:2px;background:#fff"></div><div class="a" style="left:27px;top:351px;width:2px;height:10px;background:#fff"></div>
<svg style="left:48px;top:348px" width="22" height="16" viewBox="0 0 22 16"><path d="M1.5 0.5H8L10 2.5H18.5Q19.5 2.5 19.5 3.5V14.5Q19.5 15.5 18.5 15.5H1.5Q0.5 15.5 0.5 14.5V1.5Q0.5 0.5 1.5 0.5Z" fill="#c39f66"/><path d="M4.2 4.5H21Q21.8 4.5 21.7 5.3L20.5 14.5Q20.3 15.5 19.3 15.5H1.6Q2.6 15.3 2.8 14.3L3.5 5.3Q3.6 4.5 4.2 4.5Z" fill="#f6d576"/></svg>
<div class="a" style="left:76px;top:345px;height:24px;line-height:24px;font-size:13px;color:#383838;white-space:nowrap">Escritorios</div>
<div class="a" style="left:20px;top:372px;width:16px;height:16px;border-radius:50%;background:#8f8f8f"></div>
<div class="a" style="left:23px;top:379px;width:10px;height:2px;background:#fff"></div><div class="a" style="left:27px;top:375px;width:2px;height:10px;background:#fff"></div>
<svg style="left:48px;top:372px" width="22" height="16" viewBox="0 0 22 16"><path d="M1.5 0.5H8L10 2.5H18.5Q19.5 2.5 19.5 3.5V14.5Q19.5 15.5 18.5 15.5H1.5Q0.5 15.5 0.5 14.5V1.5Q0.5 0.5 1.5 0.5Z" fill="#c39f66"/><path d="M4.2 4.5H21Q21.8 4.5 21.7 5.3L20.5 14.5Q20.3 15.5 19.3 15.5H1.6Q2.6 15.3 2.8 14.3L3.5 5.3Q3.6 4.5 4.2 4.5Z" fill="#f6d576"/></svg>
<div class="a" style="left:76px;top:369px;height:24px;line-height:24px;font-size:13px;color:#383838;white-space:nowrap">Floreros</div>
<div class="a" style="left:20px;top:396px;width:16px;height:16px;border-radius:50%;background:#8f8f8f"></div>
<div class="a" style="left:23px;top:403px;width:10px;height:2px;background:#fff"></div><div class="a" style="left:27px;top:399px;width:2px;height:10px;background:#fff"></div>
<svg style="left:48px;top:396px" width="22" height="16" viewBox="0 0 22 16"><path d="M1.5 0.5H8L10 2.5H18.5Q19.5 2.5 19.5 3.5V14.5Q19.5 15.5 18.5 15.5H1.5Q0.5 15.5 0.5 14.5V1.5Q0.5 0.5 1.5 0.5Z" fill="#c39f66"/><path d="M4.2 4.5H21Q21.8 4.5 21.7 5.3L20.5 14.5Q20.3 15.5 19.3 15.5H1.6Q2.6 15.3 2.8 14.3L3.5 5.3Q3.6 4.5 4.2 4.5Z" fill="#f6d576"/></svg>
<div class="a" style="left:76px;top:393px;height:24px;line-height:24px;font-size:13px;color:#383838;white-space:nowrap">Jugueteros</div>
<div class="a" style="left:20px;top:420px;width:16px;height:16px;border-radius:50%;background:#8f8f8f"></div>
<div class="a" style="left:23px;top:427px;width:10px;height:2px;background:#fff"></div><div class="a" style="left:27px;top:423px;width:2px;height:10px;background:#fff"></div>
<svg style="left:48px;top:420px" width="22" height="16" viewBox="0 0 22 16"><path d="M1.5 0.5H8L10 2.5H18.5Q19.5 2.5 19.5 3.5V14.5Q19.5 15.5 18.5 15.5H1.5Q0.5 15.5 0.5 14.5V1.5Q0.5 0.5 1.5 0.5Z" fill="#c39f66"/><path d="M4.2 4.5H21Q21.8 4.5 21.7 5.3L20.5 14.5Q20.3 15.5 19.3 15.5H1.6Q2.6 15.3 2.8 14.3L3.5 5.3Q3.6 4.5 4.2 4.5Z" fill="#f6d576"/></svg>
<div class="a" style="left:76px;top:417px;height:24px;line-height:24px;font-size:13px;color:#383838;white-space:nowrap">Juguetes</div>
<div class="a" style="left:20px;top:444px;width:16px;height:16px;border-radius:50%;background:#8f8f8f"></div>
<div class="a" style="left:23px;top:451px;width:10px;height:2px;background:#fff"></div><div class="a" style="left:27px;top:447px;width:2px;height:10px;background:#fff"></div>
<svg style="left:48px;top:444px" width="22" height="16" viewBox="0 0 22 16"><path d="M1.5 0.5H8L10 2.5H18.5Q19.5 2.5 19.5 3.5V14.5Q19.5 15.5 18.5 15.5H1.5Q0.5 15.5 0.5 14.5V1.5Q0.5 0.5 1.5 0.5Z" fill="#c39f66"/><path d="M4.2 4.5H21Q21.8 4.5 21.7 5.3L20.5 14.5Q20.3 15.5 19.3 15.5H1.6Q2.6 15.3 2.8 14.3L3.5 5.3Q3.6 4.5 4.2 4.5Z" fill="#f6d576"/></svg>
<div class="a" style="left:76px;top:441px;height:24px;line-height:24px;font-size:13px;color:#383838;white-space:nowrap">Lámparas de mesa</div>
<div class="a" style="left:20px;top:468px;width:16px;height:16px;border-radius:50%;background:#8f8f8f"></div>
<div class="a" style="left:23px;top:475px;width:10px;height:2px;background:#fff"></div><div class="a" style="left:27px;top:471px;width:2px;height:10px;background:#fff"></div>
<svg style="left:48px;top:468px" width="22" height="16" viewBox="0 0 22 16"><path d="M1.5 0.5H8L10 2.5H18.5Q19.5 2.5 19.5 3.5V14.5Q19.5 15.5 18.5 15.5H1.5Q0.5 15.5 0.5 14.5V1.5Q0.5 0.5 1.5 0.5Z" fill="#c39f66"/><path d="M4.2 4.5H21Q21.8 4.5 21.7 5.3L20.5 14.5Q20.3 15.5 19.3 15.5H1.6Q2.6 15.3 2.8 14.3L3.5 5.3Q3.6 4.5 4.2 4.5Z" fill="#f6d576"/></svg>
<div class="a" style="left:76px;top:465px;height:24px;line-height:24px;font-size:13px;color:#383838;white-space:nowrap">Lámparas de pared</div>
<div class="a" style="left:20px;top:492px;width:16px;height:16px;border-radius:50%;background:#8f8f8f"></div>
<div class="a" style="left:23px;top:499px;width:10px;height:2px;background:#fff"></div><div class="a" style="left:27px;top:495px;width:2px;height:10px;background:#fff"></div>
<svg style="left:48px;top:492px" width="22" height="16" viewBox="0 0 22 16"><path d="M1.5 0.5H8L10 2.5H18.5Q19.5 2.5 19.5 3.5V14.5Q19.5 15.5 18.5 15.5H1.5Q0.5 15.5 0.5 14.5V1.5Q0.5 0.5 1.5 0.5Z" fill="#c39f66"/><path d="M4.2 4.5H21Q21.8 4.5 21.7 5.3L20.5 14.5Q20.3 15.5 19.3 15.5H1.6Q2.6 15.3 2.8 14.3L3.5 5.3Q3.6 4.5 4.2 4.5Z" fill="#f6d576"/></svg>
<div class="a" style="left:76px;top:489px;height:24px;line-height:24px;font-size:13px;color:#383838;white-space:nowrap">Lámparas de pie</div>
<div class="a" style="left:20px;top:516px;width:16px;height:16px;border-radius:50%;background:#8f8f8f"></div>
<div class="a" style="left:23px;top:523px;width:10px;height:2px;background:#fff"></div><div class="a" style="left:27px;top:519px;width:2px;height:10px;background:#fff"></div>
<svg style="left:48px;top:516px" width="22" height="16" viewBox="0 0 22 16"><path d="M1.5 0.5H8L10 2.5H18.5Q19.5 2.5 19.5 3.5V14.5Q19.5 15.5 18.5 15.5H1.5Q0.5 15.5 0.5 14.5V1.5Q0.5 0.5 1.5 0.5Z" fill="#c39f66"/><path d="M4.2 4.5H21Q21.8 4.5 21.7 5.3L20.5 14.5Q20.3 15.5 19.3 15.5H1.6Q2.6 15.3 2.8 14.3L3.5 5.3Q3.6 4.5 4.2 4.5Z" fill="#f6d576"/></svg>
<div class="a" style="left:76px;top:513px;height:24px;line-height:24px;font-size:13px;color:#383838;white-space:nowrap">Lámparas suspendidas</div>
<div class="a" style="left:20px;top:540px;width:16px;height:16px;border-radius:50%;background:#8f8f8f"></div>
<div class="a" style="left:23px;top:547px;width:10px;height:2px;background:#fff"></div><div class="a" style="left:27px;top:543px;width:2px;height:10px;background:#fff"></div>
<svg style="left:48px;top:540px" width="22" height="16" viewBox="0 0 22 16"><path d="M1.5 0.5H8L10 2.5H18.5Q19.5 2.5 19.5 3.5V14.5Q19.5 15.5 18.5 15.5H1.5Q0.5 15.5 0.5 14.5V1.5Q0.5 0.5 1.5 0.5Z" fill="#c39f66"/><path d="M4.2 4.5H21Q21.8 4.5 21.7 5.3L20.5 14.5Q20.3 15.5 19.3 15.5H1.6Q2.6 15.3 2.8 14.3L3.5 5.3Q3.6 4.5 4.2 4.5Z" fill="#f6d576"/></svg>
<div class="a" style="left:76px;top:537px;height:24px;line-height:24px;font-size:13px;color:#383838;white-space:nowrap">Libreros</div>
<div class="a" style="left:20px;top:564px;width:16px;height:16px;border-radius:50%;background:#8f8f8f"></div>
<div class="a" style="left:23px;top:571px;width:10px;height:2px;background:#fff"></div><div class="a" style="left:27px;top:567px;width:2px;height:10px;background:#fff"></div>
<svg style="left:48px;top:564px" width="22" height="16" viewBox="0 0 22 16"><path d="M1.5 0.5H8L10 2.5H18.5Q19.5 2.5 19.5 3.5V14.5Q19.5 15.5 18.5 15.5H1.5Q0.5 15.5 0.5 14.5V1.5Q0.5 0.5 1.5 0.5Z" fill="#c39f66"/><path d="M4.2 4.5H21Q21.8 4.5 21.7 5.3L20.5 14.5Q20.3 15.5 19.3 15.5H1.6Q2.6 15.3 2.8 14.3L3.5 5.3Q3.6 4.5 4.2 4.5Z" fill="#f6d576"/></svg>
<div class="a" style="left:76px;top:561px;height:24px;line-height:24px;font-size:13px;color:#383838;white-space:nowrap">Macetas</div>
<div class="a" style="left:20px;top:588px;width:16px;height:16px;border-radius:50%;background:#8f8f8f"></div>
<div class="a" style="left:23px;top:595px;width:10px;height:2px;background:#fff"></div><div class="a" style="left:27px;top:591px;width:2px;height:10px;background:#fff"></div>
<svg style="left:48px;top:588px" width="22" height="16" viewBox="0 0 22 16"><path d="M1.5 0.5H8L10 2.5H18.5Q19.5 2.5 19.5 3.5V14.5Q19.5 15.5 18.5 15.5H1.5Q0.5 15.5 0.5 14.5V1.5Q0.5 0.5 1.5 0.5Z" fill="#c39f66"/><path d="M4.2 4.5H21Q21.8 4.5 21.7 5.3L20.5 14.5Q20.3 15.5 19.3 15.5H1.6Q2.6 15.3 2.8 14.3L3.5 5.3Q3.6 4.5 4.2 4.5Z" fill="#f6d576"/></svg>
<div class="a" style="left:76px;top:585px;height:24px;line-height:24px;font-size:13px;color:#383838;white-space:nowrap">Mesa Lateral y Buros</div>
<div class="a" style="left:20px;top:612px;width:16px;height:16px;border-radius:50%;background:#8f8f8f"></div>
<div class="a" style="left:23px;top:619px;width:10px;height:2px;background:#fff"></div><div class="a" style="left:27px;top:615px;width:2px;height:10px;background:#fff"></div>
<svg style="left:48px;top:612px" width="22" height="16" viewBox="0 0 22 16"><path d="M1.5 0.5H8L10 2.5H18.5Q19.5 2.5 19.5 3.5V14.5Q19.5 15.5 18.5 15.5H1.5Q0.5 15.5 0.5 14.5V1.5Q0.5 0.5 1.5 0.5Z" fill="#c39f66"/><path d="M4.2 4.5H21Q21.8 4.5 21.7 5.3L20.5 14.5Q20.3 15.5 19.3 15.5H1.6Q2.6 15.3 2.8 14.3L3.5 5.3Q3.6 4.5 4.2 4.5Z" fill="#f6d576"/></svg>
<div class="a" style="left:76px;top:609px;height:24px;line-height:24px;font-size:13px;color:#383838;white-space:nowrap">Muebles de TV</div>
<div class="a" style="left:20px;top:636px;width:16px;height:16px;border-radius:50%;background:#8f8f8f"></div>
<div class="a" style="left:23px;top:643px;width:10px;height:2px;background:#fff"></div><div class="a" style="left:27px;top:639px;width:2px;height:10px;background:#fff"></div>
<svg style="left:48px;top:636px" width="22" height="16" viewBox="0 0 22 16"><path d="M1.5 0.5H8L10 2.5H18.5Q19.5 2.5 19.5 3.5V14.5Q19.5 15.5 18.5 15.5H1.5Q0.5 15.5 0.5 14.5V1.5Q0.5 0.5 1.5 0.5Z" fill="#c39f66"/><path d="M4.2 4.5H21Q21.8 4.5 21.7 5.3L20.5 14.5Q20.3 15.5 19.3 15.5H1.6Q2.6 15.3 2.8 14.3L3.5 5.3Q3.6 4.5 4.2 4.5Z" fill="#f6d576"/></svg>
<div class="a" style="left:76px;top:633px;height:24px;line-height:24px;font-size:13px;color:#383838;white-space:nowrap">Organizadores y Limpieza</div>
<div class="a" style="left:20px;top:660px;width:16px;height:16px;border-radius:50%;background:#8f8f8f"></div>
<div class="a" style="left:23px;top:667px;width:10px;height:2px;background:#fff"></div><div class="a" style="left:27px;top:663px;width:2px;height:10px;background:#fff"></div>
<svg style="left:48px;top:660px" width="22" height="16" viewBox="0 0 22 16"><path d="M1.5 0.5H8L10 2.5H18.5Q19.5 2.5 19.5 3.5V14.5Q19.5 15.5 18.5 15.5H1.5Q0.5 15.5 0.5 14.5V1.5Q0.5 0.5 1.5 0.5Z" fill="#c39f66"/><path d="M4.2 4.5H21Q21.8 4.5 21.7 5.3L20.5 14.5Q20.3 15.5 19.3 15.5H1.6Q2.6 15.3 2.8 14.3L3.5 5.3Q3.6 4.5 4.2 4.5Z" fill="#f6d576"/></svg>
<div class="a" style="left:76px;top:657px;height:24px;line-height:24px;font-size:13px;color:#383838;white-space:nowrap">Peluches</div>
<div class="a" style="left:285px;top:8px;width:15px;height:669px;background:#f1f1f1"></div>
<svg style="left:288px;top:13px" width="8" height="5"><path d="M0 4.5L4 0.5L8 4.5Z" fill="#a3a3a3"/></svg>
<div class="a" style="left:287px;top:23px;width:11px;height:594px;background:#c1c1c1"></div>
<svg style="left:288px;top:665px" width="8" height="5"><path d="M0 0.5L8 0.5L4 4.5Z" fill="#505050"/></svg>
</div>
<div class="a" style="left:370px;top:140px;width:10px;height:921px;background:#dfe0e2"></div>
<div class="a" style="left:370px;top:577px;width:10px;height:48px;background:#d0d1d3"></div>
<svg style="left:372px;top:596px" width="5" height="9"><path d="M4.5 0L0 4.5L4.5 9Z" fill="#8a8a8a"/></svg><!-- ============ MAIN PANEL ============ -->
<div class="a" style="left:380px;top:140px;width:205px;height:36px;background:#3a3d40"></div>
<div class="a" style="left:380px;top:176px;width:874px;height:3px;background:#3a3d40"></div>
<svg style="left:393px;top:147px" width="18" height="22" viewBox="0 0 18 22"><circle cx="9" cy="13" r="7.3" stroke="#8fd19e" stroke-width="1.8" fill="none"/><path d="M9 13.5V4" stroke="#3aa44e" stroke-width="2"/><path d="M5 5L9 0.5L13 5Z" fill="#3aa44e"/></svg>
<div class="a" style="left:420px;top:140px;height:36px;line-height:36px;font-size:14px;color:#e8e8e8;white-space:nowrap">Import Configuration</div>
<div class="a" style="left:559px;top:150px;width:20px;height:20px;border-radius:50%;background:#737373"></div>
<svg style="left:564px;top:155px" width="10" height="10"><path d="M1.5 1.5L8.5 8.5M8.5 1.5L1.5 8.5" stroke="#34373a" stroke-width="2.6"/></svg>
<!-- PIMCORE logo -->
<svg style="left:1138px;top:140px" width="116" height="28" viewBox="0 0 116 28"><g stroke="#6e6e6e" stroke-width="2.5" fill="none"><path d="M7.5 19.8V8.1H15.6A3.15 3.15 0 0 1 15.6 14.4H7.5"/><path d="M23.2 8V19.8"/><path d="M28.2 19.8V8.1L34.9 15.2L41.6 8.1V19.8"/><path d="M59.5 6.6A7.8 7.8 0 1 0 59.5 19.4L65.8 9.2"/><circle cx="69.7" cy="13.2" r="5.6"/><path d="M80.5 19.8V8.1H87.4A3.15 3.15 0 0 1 87.4 14.4H80.5M86.2 14.4L91.4 19.8"/><path d="M105.6 8.1H96.4V19.3H105.6M96.4 13.7H104.5"/></g><circle cx="110.2" cy="8.3" r="1.2" stroke="#6e6e6e" stroke-width="0.6" fill="none"/></svg>
<!-- content area -->
<div class="a" style="left:380px;top:179px;width:874px;height:838px;background:#f5f5f5"></div>
<div class="a" style="left:380px;top:1017px;width:874px;height:44px;background:#ebebeb"></div>
<!-- subtabs -->
<div class="a" style="left:380px;top:221px;width:874px;height:1px;background:#cfcfcf"></div>
<div class="a" style="left:404px;top:187px;width:150px;height:35px;background:#f5f5f5;border:1px solid #c8c8c8;border-bottom:none"></div>
<svg style="left:415px;top:196px" width="24" height="18" viewBox="0 0 24 18"><rect x="2" y="0.5" width="17" height="12" rx="1.5" fill="#9a9a9a"/><rect x="3.5" y="2" width="14" height="9" fill="#111"/><path d="M0 13H17V15H1Z" fill="#9a9a9a"/><rect x="15" y="5.5" width="8" height="12.5" rx="1.2" fill="#9a9a9a"/><rect x="16.5" y="7.5" width="5" height="8" fill="#111"/></svg>
<div class="a" style="left:445px;top:195px;height:22px;line-height:22px;font-size:13px;color:#3a3a3a;white-space:nowrap">CSV File Preview</div>
<svg style="left:572px;top:195px" width="20" height="20" viewBox="0 0 20 20"><rect x="0" y="0" width="20" height="20" rx="2.5" fill="#3b6fe6"/><g fill="#a8c4f6"><rect x="3" y="3" width="4" height="4"/><rect x="8" y="3" width="4" height="4"/><rect x="13" y="3" width="4" height="4"/><rect x="3" y="8" width="4" height="4"/><rect x="8" y="8" width="4" height="4"/><rect x="13" y="8" width="4" height="4"/><rect x="3" y="13" width="4" height="4"/><rect x="8" y="13" width="4" height="4"/><rect x="13" y="13" width="4" height="4"/></g></svg>
<div class="a" style="left:600px;top:195px;height:22px;line-height:22px;font-size:13px;color:#3a3a3a;white-space:nowrap;letter-spacing:0.35px">Column Configuration</div>
<svg style="left:762px;top:195px" width="20" height="20" viewBox="-10 -10 20 20"><path d="M-2 -9.5 L2 -9.5 L2.6 -6.8 L4.6 -5.6 L7.4 -6.6 L9.4 -3.2 L7.2 -1.4 L7.2 1.4 L9.4 3.2 L7.4 6.6 L4.6 5.6 L2.6 6.8 L2 9.5 L-2 9.5 L-2.6 6.8 L-4.6 5.6 L-7.4 6.6 L-9.4 3.2 L-7.2 1.4 L-7.2 -1.4 L-9.4 -3.2 L-7.4 -6.6 L-4.6 -5.6 L-2.6 -6.8Z" fill="#e9dc3c"/><circle r="4.6" fill="none" stroke="#a89a2a" stroke-width="1.2"/><circle r="3.9" fill="#f5f5f5"/></svg>
<div class="a" style="left:790px;top:195px;height:22px;line-height:22px;font-size:13px;color:#3a3a3a;white-space:nowrap">Resolver Settings</div>
<svg style="left:924px;top:195px" width="17" height="20" viewBox="0 0 17 20"><path d="M1.5 0H11L17 6V18.5A1.5 1.5 0 0 1 15.5 20H1.5A1.5 1.5 0 0 1 0 18.5V1.5A1.5 1.5 0 0 1 1.5 0Z" fill="#5b8def"/><path d="M11 0V6H17Z" fill="#a9c5f7"/><path d="M5 8.5A2.5 2.5 0 0 0 7.6 11.6L11.5 15.5L12.8 14.2L8.9 10.3A2.5 2.5 0 0 0 5.8 7.7L7 8.9L6.3 9.6Z" fill="#fff"/></svg>
<div class="a" style="left:950px;top:195px;height:22px;line-height:22px;font-size:13px;color:#3a3a3a;white-space:nowrap;letter-spacing:-0.25px">CSV Settings</div>
<svg style="left:1051px;top:195px" width="25" height="21" viewBox="0 0 25 21"><path d="M7 4.5A8 8 0 0 1 18 4.5" stroke="#3b78e7" stroke-width="1.4" fill="none"/><path d="M7 16.5A8 8 0 0 0 18 16.5" stroke="#e8553a" stroke-width="1.4" fill="none"/><circle cx="5" cy="9" r="2.3" fill="#3b78e7"/><path d="M0.5 15.5A4.5 4 0 0 1 9.5 15.5Z" fill="#3b78e7"/><circle cx="20" cy="9" r="2.3" fill="#e8553a"/><path d="M15.5 15.5A4.5 4 0 0 1 24.5 15.5Z" fill="#e8553a"/></svg>
<div class="a" style="left:1081px;top:195px;height:22px;line-height:22px;font-size:13px;color:#3a3a3a;white-space:nowrap">Save &amp; Share</div>
<svg style="left:1190px;top:194px" width="18" height="21" viewBox="0 0 18 21"><rect x="1" y="3" width="16" height="17" rx="1" stroke="#d8dada" stroke-width="1.6" fill="#fafafa"/><rect x="5" y="3" width="8" height="2" fill="#d8dada"/><circle cx="9" cy="2" r="1.3" stroke="#d8dada" stroke-width="1.1" fill="#fafafa"/><path d="M5 12L8 15L13 9" stroke="#a8d8b0" stroke-width="1.6" fill="none"/></svg>
<div class="a" style="left:1217px;top:194px;width:18px;height:22px;line-height:22px;font-size:13px;color:#c6c6c6;white-space:nowrap;overflow:hidden">Import</div>
<svg style="left:1237px;top:197px" width="9" height="15"><path d="M1.5 1.5L7.5 7.5L1.5 13.5" stroke="#8e8e8e" stroke-width="2.8" fill="none"/></svg>
<!-- checkbox row -->
<div class="a" style="left:390px;top:241px;height:22px;line-height:22px;font-size:13px;color:#3a3a3a;white-space:nowrap;letter-spacing:0.3px">first row = headline:</div>
<svg style="left:595px;top:242px" width="18" height="16" viewBox="0 0 18 16"><rect x="0.8" y="2.8" width="12.5" height="12.5" rx="1.5" stroke="#9c9c9c" stroke-width="1.4" fill="#f5f5f5"/><path d="M3.5 8.5L7 12L16 2.5" stroke="#9c9c9c" stroke-width="2.4" fill="none"/></svg>
<!-- grid -->
<div class="a" style="left:380px;top:287px;width:874px;height:20px;background:#cbcbcb"></div>
<div class="a" style="left:380px;top:307px;width:874px;height:25px;background:#fff"></div>
<div class="a" style="left:380px;top:332px;width:874px;height:1px;background:#e4e4e4"></div>
<div class="a" style="left:380px;top:333px;width:874px;height:23px;background:#f5f5f5"></div>
<div class="a" style="left:380px;top:356px;width:874px;height:1px;background:#ececec"></div>
<div class="a" style="left:380px;top:357px;width:874px;height:15px;background:#f1f1f1"></div>
<svg style="left:385px;top:361px" width="5" height="8"><path d="M4.5 0L0 4L4.5 8Z" fill="#a3a3a3"/></svg>
<div class="a" style="left:395px;top:359px;width:90px;height:11px;background:#c1c1c1"></div>
<svg style="left:1244px;top:361px" width="5" height="8"><path d="M0 0L4.5 4L0 8Z" fill="#505050"/></svg>
<div class="a" style="left:380px;top:287px;width:874px;height:70px;overflow:hidden">
<div class="a" style="left:10px;top:-1px;height:20px;line-height:20px;font-size:11px;font-weight:bold;color:#404040;white-space:nowrap;letter-spacing:-0.15px">Row</div>
<div class="a" style="left:10px;top:46px;height:23px;line-height:23px;font-size:13px;color:#333;white-space:nowrap">2</div>
<div class="a" style="left:39px;top:1px;width:1px;height:19px;background:#5a5a5a"></div>
<div class="a" style="left:50px;top:-1px;height:20px;line-height:20px;font-size:11px;font-weight:bold;color:#404040;white-space:nowrap;letter-spacing:-0.15px">Preview</div>
<div class="a" style="left:119px;top:1px;width:1px;height:19px;background:#5a5a5a"></div>
<div class="a" style="left:130px;top:-1px;height:20px;line-height:20px;font-size:11px;font-weight:bold;color:#404040;white-space:nowrap;letter-spacing:-0.15px">Field 0</div>
<div class="a" style="left:130px;top:21px;height:25px;line-height:25px;font-size:13px;font-weight:bold;color:#333;white-space:nowrap">sku type</div>
<div class="a" style="left:130px;top:46px;height:23px;line-height:23px;font-size:13px;color:#333;white-space:nowrap">simple</div>
<div class="a" style="left:219px;top:1px;width:1px;height:19px;background:#5a5a5a"></div>
<div class="a" style="left:230px;top:-1px;height:20px;line-height:20px;font-size:11px;font-weight:bold;color:#404040;white-space:nowrap;letter-spacing:-0.15px">Field 1</div>
<div class="a" style="left:230px;top:21px;height:25px;line-height:25px;font-size:13px;font-weight:bold;color:#333;white-space:nowrap">attribute_...</div>
<div class="a" style="left:230px;top:46px;height:23px;line-height:23px;font-size:13px;color:#333;white-space:nowrap">Sofás</div>
<div class="a" style="left:319px;top:1px;width:1px;height:19px;background:#5a5a5a"></div>
<div class="a" style="left:330px;top:-1px;height:20px;line-height:20px;font-size:11px;font-weight:bold;color:#404040;white-space:nowrap;letter-spacing:-0.15px">Field 2</div>
<div class="a" style="left:330px;top:21px;height:25px;line-height:25px;font-size:13px;font-weight:bold;color:#333;white-space:nowrap">sku</div>
<div class="a" style="left:330px;top:46px;height:23px;line-height:23px;font-size:13px;color:#333;white-space:nowrap">17145_1</div>
<div class="a" style="left:419px;top:1px;width:1px;height:19px;background:#5a5a5a"></div>
<div class="a" style="left:430px;top:-1px;height:20px;line-height:20px;font-size:11px;font-weight:bold;color:#404040;white-space:nowrap;letter-spacing:-0.15px">Field 3</div>
<div class="a" style="left:430px;top:21px;height:25px;line-height:25px;font-size:13px;font-weight:bold;color:#333;white-space:nowrap">parent</div>
<div class="a" style="left:430px;top:46px;height:23px;line-height:23px;font-size:13px;color:#333;white-space:nowrap">17145</div>
<div class="a" style="left:519px;top:1px;width:1px;height:19px;background:#5a5a5a"></div>
<div class="a" style="left:530px;top:-1px;height:20px;line-height:20px;font-size:11px;font-weight:bold;color:#404040;white-space:nowrap;letter-spacing:-0.15px">Field 4</div>
<div class="a" style="left:530px;top:21px;height:25px;line-height:25px;font-size:13px;font-weight:bold;color:#333;white-space:nowrap">name</div>
<div class="a" style="left:530px;top:46px;height:23px;line-height:23px;font-size:13px;color:#333;white-space:nowrap">Sofá 2 cuer...</div>
<div class="a" style="left:619px;top:1px;width:1px;height:19px;background:#5a5a5a"></div>
<div class="a" style="left:630px;top:-1px;height:20px;line-height:20px;font-size:11px;font-weight:bold;color:#404040;white-space:nowrap;letter-spacing:-0.15px">Field 5</div>
<div class="a" style="left:630px;top:21px;height:25px;line-height:25px;font-size:13px;font-weight:bold;color:#333;white-space:nowrap">description</div>
<div class="a" style="left:630px;top:46px;height:23px;line-height:23px;font-size:13px;color:#333;white-space:nowrap">La línea La...</div>
<div class="a" style="left:719px;top:1px;width:1px;height:19px;background:#5a5a5a"></div>
<div class="a" style="left:730px;top:-1px;height:20px;line-height:20px;font-size:11px;font-weight:bold;color:#404040;white-space:nowrap;letter-spacing:-0.15px">Field 6</div>
<div class="a" style="left:730px;top:21px;height:25px;line-height:25px;font-size:13px;font-weight:bold;color:#333;white-space:nowrap">short_des...</div>
<div class="a" style="left:730px;top:46px;height:23px;line-height:23px;font-size:13px;color:#333;white-space:nowrap">La línea La...</div>
<div class="a" style="left:819px;top:1px;width:1px;height:19px;background:#5a5a5a"></div>
<div class="a" style="left:830px;top:-1px;height:20px;line-height:20px;font-size:11px;font-weight:bold;color:#404040;white-space:nowrap;letter-spacing:-0.15px">Field 7</div>
<div class="a" style="left:830px;top:21px;height:25px;line-height:25px;font-size:13px;font-weight:bold;color:#333;white-space:nowrap">price</div>
<div class="a" style="left:830px;top:46px;height:23px;line-height:23px;font-size:13px;color:#333;white-space:nowrap">14249.2</div>
<svg style="left:53px;top:51px" width="12" height="12" viewBox="0 0 12 12"><circle cx="7.3" cy="4.6" r="3.8" stroke="#8a8a8a" stroke-width="1.1" fill="none"/><path d="M4.6 7.4L0.8 11.2" stroke="#8a8a8a" stroke-width="1.3"/></svg>
</div>
<!-- bottom toolbar -->
<div class="a" style="left:783px;top:1023px;width:75px;height:32px;background:#3a3d40;border:1px solid #000"></div>
<svg style="left:788px;top:1028px" width="22" height="22" viewBox="0 0 22 22"><circle cx="11" cy="11" r="9.5" stroke="#e04a2a" stroke-width="2.2" fill="none"/><path d="M17.7 4.3L4.3 17.7" stroke="#e04a2a" stroke-width="2.2"/></svg>
<div class="a" style="left:819px;top:1023px;height:32px;line-height:32px;font-size:12.5px;color:#e6e6e6">Close</div>
<div class="a" style="left:865px;top:1023px;width:81px;height:32px;background:#9b9b9b;border:1px solid #7d7d7d"></div>
<svg style="left:873px;top:1029px" width="22" height="22" viewBox="0 0 22 22"><path d="M1 3H13M4.5 3V1.5H9.5V3" stroke="#c8c8c8" stroke-width="1.6" fill="none"/><path d="M2.5 5H11.5L10.8 18.5H3.2Z" fill="#c8c8c8"/><path d="M5.2 7V16.5M8.8 7V16.5" stroke="#9b9b9b" stroke-width="1.1"/><circle cx="14" cy="15.5" r="6" fill="#ef8f86"/><path d="M11.8 13.3L16.2 17.7M16.2 13.3L11.8 17.7" stroke="#fff" stroke-width="1.8"/></svg>
<div class="a" style="left:901px;top:1023px;height:32px;line-height:32px;font-size:12.5px;color:#d8d8d8">Delete</div>
<div class="a" style="left:953px;top:1023px;width:100px;height:32px;background:#000"></div>
<svg style="left:959px;top:1031px" width="22" height="16" viewBox="0 0 22 16"><path d="M1.5 0.5H8L10 2.5H18.5Q19.5 2.5 19.5 3.5V14.5Q19.5 15.5 18.5 15.5H1.5Q0.5 15.5 0.5 14.5V1.5Q0.5 0.5 1.5 0.5Z" fill="#c39f66"/><path d="M4.2 4.5H21Q21.8 4.5 21.7 5.3L20.5 14.5Q20.3 15.5 19.3 15.5H1.6Q2.6 15.3 2.8 14.3L3.5 5.3Q3.6 4.5 4.2 4.5Z" fill="#f6d576"/></svg>
<div class="a" style="left:989px;top:1023px;height:32px;line-height:32px;font-size:12.5px;color:#f0f0f0">Load</div>
<div class="a" style="left:1028px;top:1024px;width:1px;height:30px;background:#e8e8e8"></div>
<svg style="left:1037px;top:1036px" width="10" height="6"><path d="M0 0H10L5 5.5Z" fill="#fff"/></svg>
<div class="a" style="left:1059px;top:1023px;width:98px;height:32px;background:#3a3d40;border:1px solid #000"></div>
<div class="a" style="left:1065px;top:1029px;width:20px;height:20px;border-radius:50%;background:#3e9e50"></div>
<svg style="left:1069px;top:1033px" width="12" height="12"><path d="M1 6.5L4.5 10L11 2.5" stroke="#fff" stroke-width="2" fill="none"/></svg>
<div class="a" style="left:1095px;top:1023px;height:32px;line-height:32px;font-size:12.5px;color:#e6e6e6">Save</div>
<div class="a" style="left:1132px;top:1024px;width:1px;height:30px;background:#e8e8e8"></div>
<svg style="left:1142px;top:1036px" width="10" height="6"><path d="M0 0H10L5 5.5Z" fill="#fff"/></svg>
<div class="a" style="left:1164px;top:1023px;width:83px;height:32px;background:#3a3d40;border:1px solid #000"></div>
<svg style="left:1171px;top:1028px" width="18" height="23" viewBox="0 0 18 23"><path d="M4.5 7H1.2V21.5H16.5V7H13.5" stroke="#8fd19e" stroke-width="1.8" fill="none"/><path d="M9 0.5V13" stroke="#3aa44e" stroke-width="2"/><path d="M4.5 10L9 14.5L13.5 10Z" fill="#3aa44e"/></svg>
<div class="a" style="left:1200px;top:1023px;height:32px;line-height:32px;font-size:12.5px;color:#e6e6e6">Import</div>
</body></html>
